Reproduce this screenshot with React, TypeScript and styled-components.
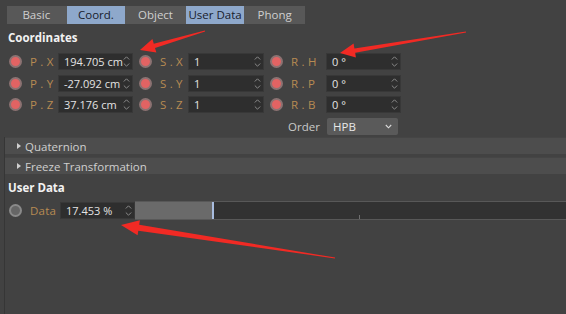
import React from "react";
import styled, {createGlobalStyle} from "styled-components";


const Font = `"Open Sans", "Noto Sans", sans-serif`;

const GlobalStyle = createGlobalStyle`
	html, body {
		margin: 0;
		padding: 0;
		background: #424242;
	}
	body {
		font-family: ${Font};
		font-size: 11px;
		color: #d6d6d6;
	}
`;

interface TabProps {
	active?: boolean
}

interface ToneProps {
	tone?: "red" | "grey"
}

interface WidthProps {
	w: number
}

const Page = styled.div`
	position: relative;
	width: 566px;
	height: 314px;
	overflow: hidden;
	padding-top: 6px;
	box-sizing: border-box;
`;
const TabBar = styled.div`
	display: flex;
	margin-left: 7px;
	width: 298px;
	height: 18px;
	background: #585858;
`;
const Tab = styled.div<TabProps>`
	width: 59px;
	height: 18px;
	line-height: 18px;
	text-align: center;
	font-size: 11.5px;
	margin-right: 1px;
	background: ${props => props.active ? "#8ea8cb" : "transparent"};
	color: ${props => props.active ? "#18202c" : "#cfcfcf"};
`;
const SectionTitle = styled.div`
	padding-left: 8px;
	height: 20px;
	line-height: 20px;
	font-weight: 700;
	font-size: 11.5px;
	color: #f2f2f2;
`;
const Rows = styled.div`
	display: flex;
	flex-direction: column;
	margin-top: 3px;
`;
const Row = styled.div`
	display: flex;
	align-items: center;
	height: 21.5px;
`;
const Group = styled.div`
	display: flex;
	align-items: center;
	margin-left: 6px;
	&:first-child {
		margin-left: 9px;
	}
`;
const Dot = styled.div<ToneProps>`
	width: 9px;
	height: 9px;
	border-radius: 50%;
	border: 2px solid ${props => props.tone === "grey" ? "#8a8a8a" : "#8c7272"};
	background: ${props => props.tone === "grey" ? "#666" : "#e26363"};
	flex: none;
`;
const Label = styled.div<WidthProps>`
	width: ${props => props.w}px;
	margin-left: 8px;
	color: #b88b52;
	font-size: 11.5px;
	white-space: nowrap;
	letter-spacing: 0.2px;
`;
const Field = styled.div<WidthProps>`
	width: ${props => props.w}px;
	height: 17px;
	box-sizing: border-box;
	background: #2e2e2e;
	border: 1px solid #383838;
	display: flex;
	align-items: center;
	padding-left: 5px;
	color: #e4e4e4;
	font-size: 11px;
	white-space: nowrap;
`;
const FieldText = styled.span`
	flex: 1;
	min-width: 0;
`;
const Spinner = styled.svg`
	flex: none;
	width: 7px;
	height: 13px;
	margin: 0 2px 0 1px;
`;
const OrderRow = styled(Row)`
	padding-left: 288px;
`;
const OrderLabel = styled.div`
	width: 39px;
	font-size: 11.5px;
	color: #c9c9c9;
`;
const Select = styled.div`
	width: 71px;
	height: 17px;
	box-sizing: border-box;
	background: #5a5a5a;
	border-radius: 2px;
	display: flex;
	align-items: center;
	padding: 0 6px;
	color: #e8e8e8;
	font-size: 11.5px;
`;
const SelectText = styled.span`
	flex: 1;
`;
const Lower = styled.div`
	margin-left: 4px;
	border-left: 1px solid #363636;
	padding-bottom: 120px;
`;
const Fold = styled.div`
	display: flex;
	align-items: center;
	height: 17px;
	margin-bottom: 3px;
	background: #4d4d4d;
	border-top: 1px solid #454545;
	color: #cfcfcf;
	font-size: 11.5px;
	padding-left: 12px;
	box-sizing: border-box;
`;
const Caret = styled.span`
	width: 0;
	height: 0;
	border-top: 3px solid transparent;
	border-bottom: 3px solid transparent;
	border-left: 4px solid #cfcfcf;
	margin-right: 4px;
`;
const UserTitle = styled(SectionTitle)`
	padding-left: 3px;
	margin-top: 4px;
`;
const DataRow = styled.div`
	display: flex;
	align-items: center;
	height: 19px;
	margin-top: 3px;
	padding-left: 4px;
`;
const Slider = styled.div`
	position: relative;
	flex: 1;
	height: 19px;
	box-sizing: border-box;
	background: #323232;
	border-top: 1px solid #585858;
	border-bottom: 1px solid #585858;
`;
const SliderFill = styled.div`
	height: 100%;
	background: #6a6a6a;
	border-right: 2px solid #a8bcdf;
	box-sizing: border-box;
`;
const Tick = styled.div`
	position: absolute;
	bottom: 0;
	width: 1px;
	height: 4px;
	background: #6e6e6e;
`;
const Overlay = styled.svg`
	position: absolute;
	left: 0;
	top: 0;
	pointer-events: none;
`;


function SpinArrows()
{
	return (
		<Spinner viewBox="0 0 7 13">
			<path d="M0.8 4.5 L3.5 1.8 L6.2 4.5 M0.8 8.5 L3.5 11.2 L6.2 8.5"
				fill="none" stroke="#8a8a8a" strokeWidth="1" />
		</Spinner>
	);
}

function arrowPoints(
	tx: number, ty: number, px: number, py: number,
	head: number, headW: number, shaftW: number)
{
	const dx = px - tx;
	const dy = py - ty;
	const len = Math.hypot(dx, dy);
	const ux = dx / len, uy = dy / len;
	const nx = -uy, ny = ux;
	const bx = px - ux * head, by = py - uy * head;
	const pts = [
		[tx + nx * 0.4, ty + ny * 0.4],
		[bx + nx * shaftW, by + ny * shaftW],
		[bx + nx * headW, by + ny * headW],
		[px, py],
		[bx - nx * headW, by - ny * headW],
		[bx - nx * shaftW, by - ny * shaftW],
		[tx - nx * 0.4, ty - ny * 0.4]
	];
	return pts.map(p => p.map(v => v.toFixed(1)).join(",")).join(" ");
}

const coords = [
	{p: "X", pv: "194.705 cm", s: "X", r: "H"},
	{p: "Y", pv: "-27.092 cm", s: "Y", r: "P"},
	{p: "Z", pv: "37.176 cm", s: "Z", r: "B"}
];

const tabs = [
	{name: "Basic", active: false},
	{name: "Coord.", active: true},
	{name: "Object", active: false},
	{name: "User Data", active: true},
	{name: "Phong", active: false}
];

export default function App()
{
	return (
		<Page>
			<GlobalStyle />
			<TabBar>
				{tabs.map(t => <Tab key={t.name} active={t.active}>{t.name}</Tab>)}
			</TabBar>
			<SectionTitle style={{marginTop: 4}}>Coordinates</SectionTitle>
			<Rows>
				{coords.map(c => (
					<Row key={c.p}>
						<Group>
							<Dot />
							<Label w={28}>P . {c.p}</Label>
							<Field w={75}><FieldText>{c.pv}</FieldText><SpinArrows /></Field>
						</Group>
						<Group>
							<Dot />
							<Label w={28}>S . {c.s}</Label>
							<Field w={76}><FieldText>1</FieldText><SpinArrows /></Field>
						</Group>
						<Group>
							<Dot />
							<Label w={35}>R . {c.r}</Label>
							<Field w={75}><FieldText>0 °</FieldText><SpinArrows /></Field>
						</Group>
					</Row>
				))}
				<OrderRow>
					<OrderLabel>Order</OrderLabel>
					<Select>
						<SelectText>HPB</SelectText>
						<svg width="7" height="5" viewBox="0 0 7 5">
							<path d="M0.8 1 L3.5 3.8 L6.2 1" fill="none" stroke="#dcdcdc" strokeWidth="1.1" />
						</svg>
					</Select>
				</OrderRow>
			</Rows>
			<Lower>
				<Fold><Caret />Quaternion</Fold>
				<Fold><Caret />Freeze Transformation</Fold>
				<UserTitle>User Data</UserTitle>
				<DataRow>
					<Dot tone="grey" />
					<Label w={30}>Data</Label>
					<Field w={75}><FieldText>17.453 %</FieldText><SpinArrows /></Field>
					<Slider>
						<SliderFill style={{width: 79}} />
						<Tick style={{left: 224}} />
					</Slider>
				</DataRow>
			</Lower>
			<Overlay width="566" height="314" viewBox="0 0 566 314">
				<polygon points={arrowPoints(205, 31, 140, 50, 15, 7, 2.2)} fill="#f12a24" />
				<polygon points={arrowPoints(466, 32, 340, 53, 15, 7, 2.2)} fill="#f12a24" />
				<polygon points={arrowPoints(335, 258, 121, 225, 18, 7.5, 3)} fill="#f12a24" />
			</Overlay>
		</Page>
	);
}
